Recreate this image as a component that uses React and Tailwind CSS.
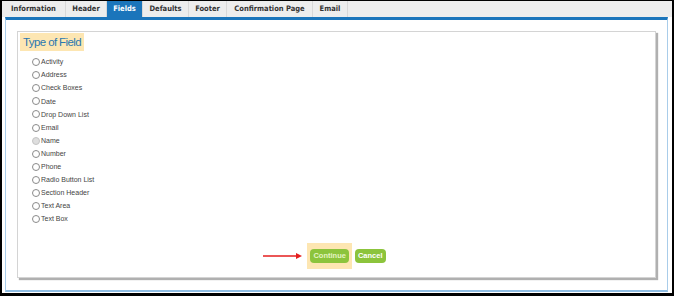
import React from 'react';

const tabs = [
  { label: 'Information', w: 'w-[64px]' },
  { label: 'Header', w: 'w-[41px]' },
  { label: 'Fields', w: 'w-[36px]', active: true },
  { label: 'Defaults', w: 'w-[46px]' },
  { label: 'Footer', w: 'w-[38px]' },
  { label: 'Confirmation Page', w: 'w-[86px]' },
  { label: 'Email', w: 'w-[35px]' },
];

const fields = [
  'Activity',
  'Address',
  'Check Boxes',
  'Date',
  'Drop Down List',
  'Email',
  'Name',
  'Number',
  'Phone',
  'Radio Button List',
  'Section Header',
  'Text Area',
  'Text Box',
];

function Radio({ disabled }) {
  return (
    <span
      className={
        'inline-block shrink-0 w-[8px] h-[8px] rounded-full border mr-[1px] -mt-[1px] ' +
        (disabled ? 'border-[#c4c4c4] bg-[#dedede]' : 'border-[#8a8a8a] bg-white')
      }
    />
  );
}

export default function App() {
  return (
    <div className="w-[676px] h-[296px] bg-white">
      <div className="w-[674px] h-[296px] bg-white border-black border-l-2 border-r-2 border-t border-b-[3px] flex flex-col font-['Liberation_Sans',Arial,sans-serif]">
        {/* tab strip */}
        <div className="h-[16px] bg-[#ededed] flex shrink-0">
          {tabs.map((t) => (
            <div
              key={t.label}
              className={
                t.w +
                ' h-full flex items-center justify-center whitespace-nowrap text-[7.5px] font-bold font-["DejaVu_Sans_Condensed","DejaVu_Sans",sans-serif] border-r border-[#d8d8d8] ' +
                (t.active ? 'bg-[#1b75bb] text-white' : 'text-[#333333]')
              }
            >
              {t.label}
            </div>
          ))}
        </div>

        {/* panel */}
        <div className="flex-1 flex pl-[3px] pr-[4px] pb-[1px]">
          <div className="flex-1 border-t-[3px] border-t-[#1b75bb] border-x border-b-2 border-x-[#a9cdea] border-b-[#8fbde3] pl-[11px] pr-[11px] pt-[11px] pb-[12px] flex">
            <div className="flex-1 bg-white border border-[#d4d4d4] shadow-[2px_2px_1px_#b0b0b0] pl-[2px] pt-[1px] flex flex-col">
              <div className="self-start bg-[#fde6b2] text-[#2a77b0] text-[11.5px] tracking-[-0.6px] px-[3px] h-[18px] leading-[18px]">
                Type of Field
              </div>
              <div className="pl-[12px] pt-[5px] flex flex-col">
                {fields.map((f) => (
                  <label key={f} className="flex items-center h-[13.1px] text-[7px] text-[#444444]">
                    <Radio disabled={f === 'Name'} />
                    {f}
                  </label>
                ))}
              </div>
              <div className="mt-[17px] flex items-center justify-center pr-[26px]">
                <svg width="40" height="8" viewBox="0 0 40 8" className="mr-[4px]">
                  <line x1="0" y1="4" x2="34" y2="4" stroke="#e41e1e" strokeWidth="1.5" />
                  <polygon points="33,1 39,4 33,7" fill="#e41e1e" />
                </svg>
                <div className="flex bg-[#fde6b2] px-[3px] py-[6px]">
                  <button className="h-[14px] px-[3px] rounded-[4px] bg-[#8cc43c] text-[#e4f4c4] text-[7.5px] font-bold leading-[14px]">
                    Continue
                  </button>
                </div>
                <button className="ml-[3px] h-[14px] px-[3px] rounded-[4px] bg-[#8cc43c] text-white text-[7.5px] font-bold leading-[14px]">
                  Cancel
                </button>
              </div>
            </div>
          </div>
        </div>
      </div>
    </div>
  );
}
